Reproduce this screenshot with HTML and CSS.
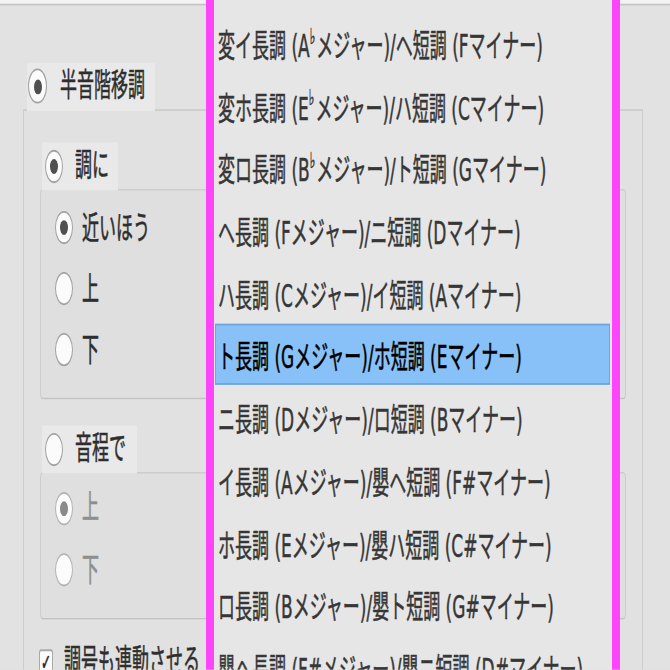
FILE: index.html
```html
<!DOCTYPE html>
<html lang="ja">
<head>
<meta charset="utf-8">
<title>移調</title>
<link rel="stylesheet" href="styles.css">
</head>
<body>
<div class="screen">
  <div class="topbar"></div>
  <div class="dialog">
    <div class="gtitle t-outer"><span class="radio on"></span><span class="lbl">半音階移調</span></div>
    <div class="frame f-outer">
      <div class="gtitle t-key"><span class="radio on"></span><span class="lbl">調に</span></div>
      <div class="frame f-key">
        <div class="opt"><span class="radio on"></span><span class="lbl">近いほう</span></div>
        <div class="opt"><span class="radio"></span><span class="lbl">上</span></div>
        <div class="opt"><span class="radio"></span><span class="lbl">下</span></div>
      </div>
      <div class="gtitle t-int"><span class="radio"></span><span class="lbl">音程で</span></div>
      <div class="frame f-int disabled">
        <div class="opt"><span class="radio on"></span><span class="lbl">上</span></div>
        <div class="opt"><span class="radio"></span><span class="lbl">下</span></div>
      </div>
      <div class="check-row"><span class="checkbox">✓</span><span class="lbl">調号も連動させる</span></div>
    </div>
  </div>
  <ul class="popup">
    <li>変ニ長調 (D<span class="flat">♭</span>メジャー)/変ロ短調 (B<span class="flat">♭</span>マイナー)</li>
    <li>変イ長調 (A<span class="flat">♭</span>メジャー)/ヘ短調 (Fマイナー)</li>
    <li>変ホ長調 (E<span class="flat">♭</span>メジャー)/ハ短調 (Cマイナー)</li>
    <li>変ロ長調 (B<span class="flat">♭</span>メジャー)/ト短調 (Gマイナー)</li>
    <li>ヘ長調 (Fメジャー)/ニ短調 (Dマイナー)</li>
    <li>ハ長調 (Cメジャー)/イ短調 (Aマイナー)</li>
    <li class="sel">ト長調 (Gメジャー)/ホ短調 (Eマイナー)</li>
    <li>ニ長調 (Dメジャー)/ロ短調 (Bマイナー)</li>
    <li>イ長調 (Aメジャー)/嬰ヘ短調 (F#マイナー)</li>
    <li>ホ長調 (Eメジャー)/嬰ハ短調 (C#マイナー)</li>
    <li>ロ長調 (Bメジャー)/嬰ト短調 (G#マイナー)</li>
    <li>嬰ヘ長調 (F#メジャー)/嬰ニ短調 (D#マイナー)</li>
    <li>嬰ハ長調 (C#メジャー)/嬰イ短調 (A#マイナー)</li>
  </ul>
</div>
</body>
</html>
```
FILE: styles.css
```css
html {
  overflow: hidden;
  background: #e2e2e2;
}

body {
  margin: 0;
  padding: 0;
  height: 670px;
  background: #e2e2e2;
}

.screen {
  position: relative;
  width: 670px;
  height: 362.2px;
  overflow: hidden;
  background: #e2e2e2;
  transform: scaleY(1.85);
  transform-origin: 0 0;
  font-family: "DejaVu Sans", "Noto Sans CJK JP", sans-serif;
  font-size: 17px;
  color: #2e2e2e;
  -webkit-text-stroke: 0.3px currentColor;
}

.topbar {
  height: 2px;
  background: #f3f3f3;
  border-bottom: 1px solid #c4c4c4;
}

.dialog {
  padding-top: 30.5px;
}

.gtitle {
  position: relative;
  z-index: 1;
  display: flex;
  align-items: center;
  gap: 12px;
  box-sizing: border-box;
  height: 26px;
  margin-bottom: -1px;
  background: #e9e9e9;
}

.t-outer {
  width: 128px;
  margin-left: 27px;
  padding-left: 1px;
  gap: 13px;
}

.t-outer .radio {
  width: 19px;
  height: 19px;
}

.t-key {
  width: 76px;
  margin-left: 2px;
  padding-left: 3px;
}

.t-int {
  width: 95px;
  margin-left: 2px;
  margin-top: 14px;
  padding-left: 3px;
}

.frame {
  box-sizing: border-box;
  border: 1px solid #cdcdcd;
  border-bottom-color: #c3c3c3;
  border-radius: 3px;
}

.f-outer {
  width: 620px;
  height: 340px;
  margin-left: 23px;
  padding: 17.3px 15px 0 16px;
  background: #e1e1e1;
  border-radius: 0;
}

.f-key {
  width: 586px;
  height: 114px;
  padding: 4px 0 0 14px;
  background: #dfdfdf;
}

.f-int {
  width: 586px;
  height: 80px;
  padding: 2px 0 0 14px;
  background: #dfdfdf;
}

.opt {
  display: flex;
  align-items: center;
  gap: 9px;
  height: 33px;
}

.f-int .opt {
  height: 33.5px;
}

.radio {
  flex: none;
  display: flex;
  align-items: center;
  justify-content: center;
  box-sizing: border-box;
  width: 18px;
  height: 18px;
  border-radius: 50%;
  border: 1.5px solid #a2a2a2;
  background: #fbfbfb;
}

.radio.on::after {
  content: "";
  width: 8px;
  height: 8px;
  border-radius: 50%;
  background: #505050;
}

.lbl {
  white-space: nowrap;
  line-height: 1;
}

.disabled .lbl {
  color: #8e8e8e;
}

.disabled .radio {
  border-color: #b4b4b4;
}

.disabled .radio.on::after {
  background: #8a8a8a;
}

.check-row {
  display: flex;
  align-items: center;
  gap: 11px;
  margin-top: 16px;
  margin-left: -1px;
  height: 14px;
}

.checkbox {
  flex: none;
  box-sizing: border-box;
  width: 14px;
  height: 14px;
  border: 1px solid #a9a9a9;
  border-radius: 2px;
  background: #fbfbfb;
  font-family: "DejaVu Sans", sans-serif;
  font-size: 12px;
  line-height: 12px;
  text-align: center;
  color: #222;
}

.popup {
  position: absolute;
  left: 206px;
  top: -27.8px;
  box-sizing: border-box;
  width: 414px;
  height: 420px;
  margin: 0;
  padding: 0;
  list-style: none;
  background: #e6e6e6;
  border-left: 8px solid #fc45fb;
  border-right: 8px solid #fc45fb;
}

.popup li {
  box-sizing: border-box;
  display: flex;
  align-items: center;
  height: 33.73px;
  padding: 1px 0 0 4px;
  white-space: nowrap;
  color: #363636;
}

.popup li.sel {
  margin: 0 2px 0 1px;
  padding-left: 2px;
  background: #88c0f8;
  border: 1px solid #6ea6dd;
  color: #000;
}

.flat {
  font-size: 0.7em;
  position: relative;
  top: -0.3em;
  margin: 0 1px 0 0;
}
```
